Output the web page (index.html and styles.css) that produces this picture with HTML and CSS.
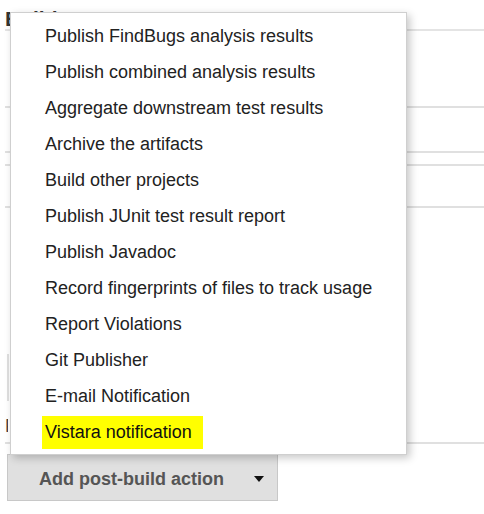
FILE: index.html
```html
<!DOCTYPE html>
<html>
<head>
<meta charset="utf-8">
<link rel="stylesheet" href="styles.css">
</head>
<body>
<div class="page">
  <h2 class="heading">Build</h2>
  <div class="section s1"></div>
  <div class="section s2"></div>
  <div class="section s3"></div>
  <div class="section s4"></div>
  <div class="section s5">
    <div class="field"></div>
    <div class="label">P</div>
  </div>
  <div class="actions">
    <button class="btn">Add post-build action<span class="caret"></span></button>
  </div>

  <ul class="menu">
    <li>Publish FindBugs analysis results</li>
    <li>Publish combined analysis results</li>
    <li>Aggregate downstream test results</li>
    <li>Archive the artifacts</li>
    <li>Build other projects</li>
    <li>Publish JUnit test result report</li>
    <li>Publish Javadoc</li>
    <li>Record fingerprints of files to track usage</li>
    <li>Report Violations</li>
    <li>Git Publisher</li>
    <li>E-mail Notification</li>
    <li><span class="mark">Vistara notification</span></li>
  </ul>
</div>
</body>
</html>
```

FILE: styles.css
```css
* { box-sizing: border-box; }
html, body { margin: 0; padding: 0; background: #fff; }
body { font-family: "Liberation Sans", Arial, sans-serif; width: 484px; height: 514px; overflow: hidden; }
.page { position: relative; height: 514px; padding-left: 5px; }
.heading {
  margin: 0;
  height: 31px;
  padding-top: 7px;
  font-size: 21px;
  font-weight: bold;
  color: #333;
  line-height: 24px;
  border-bottom: 2px solid #e4e4e4;
}
.section { border-bottom: 2px solid #e0e0e0; }
.s1 { height: 77px; }
.s2 { height: 45px; }
.s3 { height: 13px; }
.s4 { height: 42px; }
.s5 { height: 236px; padding-top: 146px; position: relative; }
.field { margin-left: 2px; width: 10px; height: 47px; border-left: 2px solid #e0e0e0; }
.label { margin-top: 17px; font-size: 18px; color: #444; line-height: 16px; width: 3px; overflow: hidden; }
.actions { padding-top: 10px; padding-left: 2px; }
.btn {
  display: flex;
  align-items: center;
  width: 271px;
  height: 47px;
  padding: 3px 0 0 31px;
  background: #e0e0e0;
  border: 1px solid #c8c8c8;
  font-family: "Liberation Sans", Arial, sans-serif;
  font-size: 18px;
  font-weight: bold;
  color: #555;
}
.caret {
  margin-left: 30px;
  width: 0; height: 0;
  border-left: 5px solid transparent;
  border-right: 5px solid transparent;
  border-top: 6px solid #111;
}
.menu {
  position: absolute;
  left: 10px;
  top: 12px;
  width: 397px;
  margin: 0;
  padding: 5px 0 4px;
  list-style: none;
  background: #fff;
  border: 1px solid #cfcfcf;
  box-shadow: 3px 3px 8px rgba(0,0,0,0.22);
}
.menu li {
  height: 36px;
  line-height: 36px;
  padding-left: 34px;
  font-size: 18px;
  color: #222;
  white-space: nowrap;
}
.mark {
  background: #ffff00;
  padding: 6px 11px 7px 3px;
  margin-left: -3px;
  color: #111;
}
```
